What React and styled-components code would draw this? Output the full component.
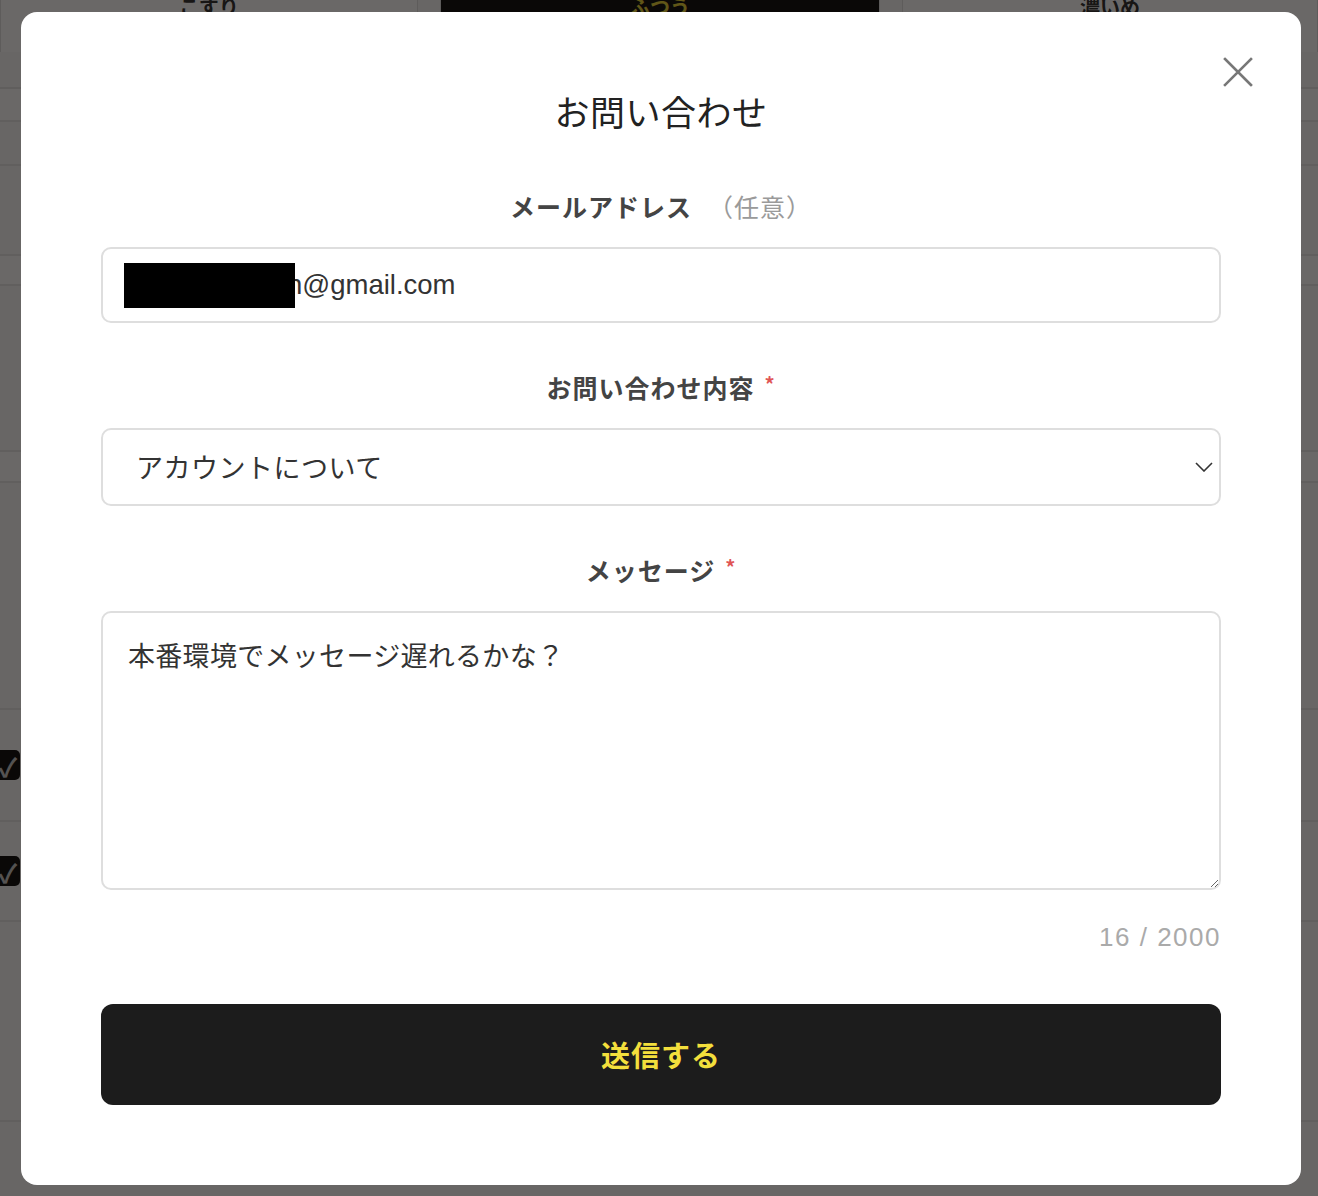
import React, { useEffect, useRef } from 'react'
import styled, { createGlobalStyle } from 'styled-components'

const GlobalStyle = createGlobalStyle`
  html, body {
    margin: 0;
    height: 100%;
    overflow: hidden;
    background: #fafafa;
  }
  body {
    font-family: "Noto Sans CJK JP", "Noto Sans", sans-serif;
  }
`

const BG_ROWS = [
  { h: 33, band: true },
  { h: 44 },
  { h: 90 },
  { h: 30, band: true },
  { h: 166 },
  { h: 31, band: true },
  { h: 227 },
  { h: 112, check: true },
  { h: 100, check: true },
  { h: 200 },
]

const App = () => {
  const areaRef = useRef(null)

  useEffect(() => {
    const el = areaRef.current
    if (el) {
      const end = el.value.length
      el.focus()
      el.setSelectionRange(end, end)
    }
  }, [])

  return (
    <>
      <GlobalStyle />
      <Page>
        <TabRow>
          <Tab>こすり</Tab>
          <Tab active>ふつう</Tab>
          <Tab>濃いめ</Tab>
        </TabRow>
        {BG_ROWS.map((r, i) => (
          <BgRow key={i} h={r.h} band={r.band}>
            {r.check && <Check>✓</Check>}
          </BgRow>
        ))}
      </Page>

      <Overlay>
        <Modal>
          <CloseButton aria-label="閉じる">
            <svg width="32" height="32" viewBox="0 0 32 32">
              <path d="M3 3 L29 29 M29 3 L3 29" stroke="#777" strokeWidth="2.6" strokeLinecap="square" />
            </svg>
          </CloseButton>

          <Title>お問い合わせ</Title>

          <Field first>
            <Label>
              メールアドレス<Optional>（任意）</Optional>
            </Label>
            <InputWrap>
              <TextInput defaultValue="n@gmail.com" />
              <Redact />
            </InputWrap>
          </Field>

          <Field>
            <Label>
              お問い合わせ内容<Required>*</Required>
            </Label>
            <SelectWrap>
              <Select defaultValue="account">
                <option value="account">アカウントについて</option>
                <option value="other">その他</option>
              </Select>
              <Chevron width="18" height="10" viewBox="0 0 18 10">
                <path d="M1 1 L9 9 L17 1" fill="none" stroke="#333" strokeWidth="1.6" />
              </Chevron>
            </SelectWrap>
          </Field>

          <Field>
            <Label>
              メッセージ<Required>*</Required>
            </Label>
            <TextArea ref={areaRef} defaultValue="本番環境でメッセージ遅れるかな？" />
          </Field>

          <Counter>16 / 2000</Counter>

          <SubmitButton>送信する</SubmitButton>
        </Modal>
      </Overlay>
    </>
  )
}

const Page = styled.div`
  height: 100vh;
  overflow: hidden;
  background: #fafafa;
`

const TabRow = styled.div`
  display: grid;
  grid-template-columns: 418px 440px 1fr;
  column-gap: 22px;
  border-bottom: 2px solid #e6e6e6;
  box-sizing: border-box;
  margin-top: -20px;
  height: 109px;
`

const Tab = styled.div`
  display: flex;
  justify-content: center;
  padding-top: 12px;
  height: 60px;
  background: ${p => (p.active ? '#111' : '#fff')};
  color: ${p => (p.active ? '#e6d23a' : '#333')};
  border-right: 1px solid #e0e0e0;
  border-left: 1px solid #e0e0e0;
  font-size: 20px;
  font-weight: 700;
`

const BgRow = styled.div`
  height: ${p => p.h}px;
  box-sizing: border-box;
  border-bottom: 2px solid #e8e8e8;
  background: ${p => (p.band ? '#ffffff' : '#fafafa')};
  display: flex;
  align-items: center;
`

const Check = styled.span`
  display: inline-flex;
  align-items: center;
  justify-content: center;
  width: 34px;
  height: 30px;
  margin-left: -14px;
  border-radius: 5px;
  background: #111;
  color: #c8c8c8;
  font-size: 26px;
  font-weight: 700;
  padding-left: 10px;
  box-sizing: border-box;
`

const Overlay = styled.div`
  position: fixed;
  inset: 0;
  background: rgba(6, 4, 2, 0.6);
  display: flex;
  align-items: center;
  justify-content: center;
  padding-left: 4px;
`

const Modal = styled.div`
  position: relative;
  width: 1280px;
  box-sizing: border-box;
  background: #fff;
  border-radius: 16px;
  padding: 75px 80px 80px;
  display: flex;
  flex-direction: column;
`

const CloseButton = styled.button`
  position: absolute;
  top: 44px;
  right: 47px;
  width: 32px;
  height: 32px;
  padding: 0;
  border: none;
  background: none;
  cursor: pointer;
  display: flex;
`

const Title = styled.h2`
  margin: 0;
  text-align: center;
  font-size: 35px;
  line-height: 48px;
  font-weight: 400;
  color: #222;
  letter-spacing: 0.5px;
`

const Field = styled.div`
  display: flex;
  flex-direction: column;
  margin-top: ${p => (p.first ? '53px' : '46px')};
`

const Label = styled.label`
  text-align: center;
  font-size: 25px;
  line-height: 36px;
  height: 36px;
  font-weight: 700;
  color: #444;
  margin-bottom: 23px;
  letter-spacing: 1px;
`

const Optional = styled.span`
  font-weight: 400;
  color: #9a9a9a;
  margin-left: 16px;
`

const Required = styled.span`
  position: relative;
  top: -6px;
  color: #e05555;
  font-size: 20px;
  line-height: 0;
  font-weight: 700;
  margin-left: 10px;
`

const InputWrap = styled.div`
  position: relative;
`

const TextInput = styled.input`
  width: 100%;
  height: 76px;
  box-sizing: border-box;
  border: 2px solid #dedede;
  border-radius: 10px;
  padding: 0 20px 0 184px;
  font-family: "Liberation Sans", "Noto Sans CJK JP", sans-serif;
  font-size: 27.5px;
  color: #333;
  outline: none;
`

const Redact = styled.span`
  position: absolute;
  left: 23px;
  top: 16px;
  width: 171px;
  height: 45px;
  background: #000;
`

const SelectWrap = styled.div`
  position: relative;
`

const Select = styled.select`
  width: 100%;
  height: 78px;
  box-sizing: border-box;
  border: 2px solid #dedede;
  border-radius: 10px;
  padding: 0 50px 0 33px;
  font-family: "Noto Sans CJK JP", sans-serif;
  font-size: 27px;
  color: #333;
  background: #fff;
  appearance: none;
  -webkit-appearance: none;
  outline: none;
  letter-spacing: 0.5px;
`

const Chevron = styled.svg`
  position: absolute;
  right: 8px;
  top: 34px;
  pointer-events: none;
`

const TextArea = styled.textarea`
  width: 100%;
  height: 279px;
  box-sizing: border-box;
  border: 2px solid #dedede;
  border-radius: 10px;
  padding: 22px 25px;
  font-family: "Noto Sans CJK JP", sans-serif;
  font-size: 27px;
  line-height: 40px;
  color: #333;
  caret-color: #333;
  outline: none;
  resize: vertical;
  letter-spacing: 0.3px;
`

const Counter = styled.div`
  margin-top: 28px;
  text-align: right;
  font-family: "Liberation Sans", sans-serif;
  font-size: 26px;
  line-height: 38px;
  color: #aaa;
  letter-spacing: 1.5px;
`

const SubmitButton = styled.button`
  margin-top: 48px;
  height: 101px;
  border: none;
  border-radius: 12px;
  background: #1c1c1c;
  color: #f3df3c;
  font-family: "Noto Sans CJK JP", sans-serif;
  font-size: 29px;
  font-weight: 700;
  letter-spacing: 1px;
  cursor: pointer;
`

export default App
